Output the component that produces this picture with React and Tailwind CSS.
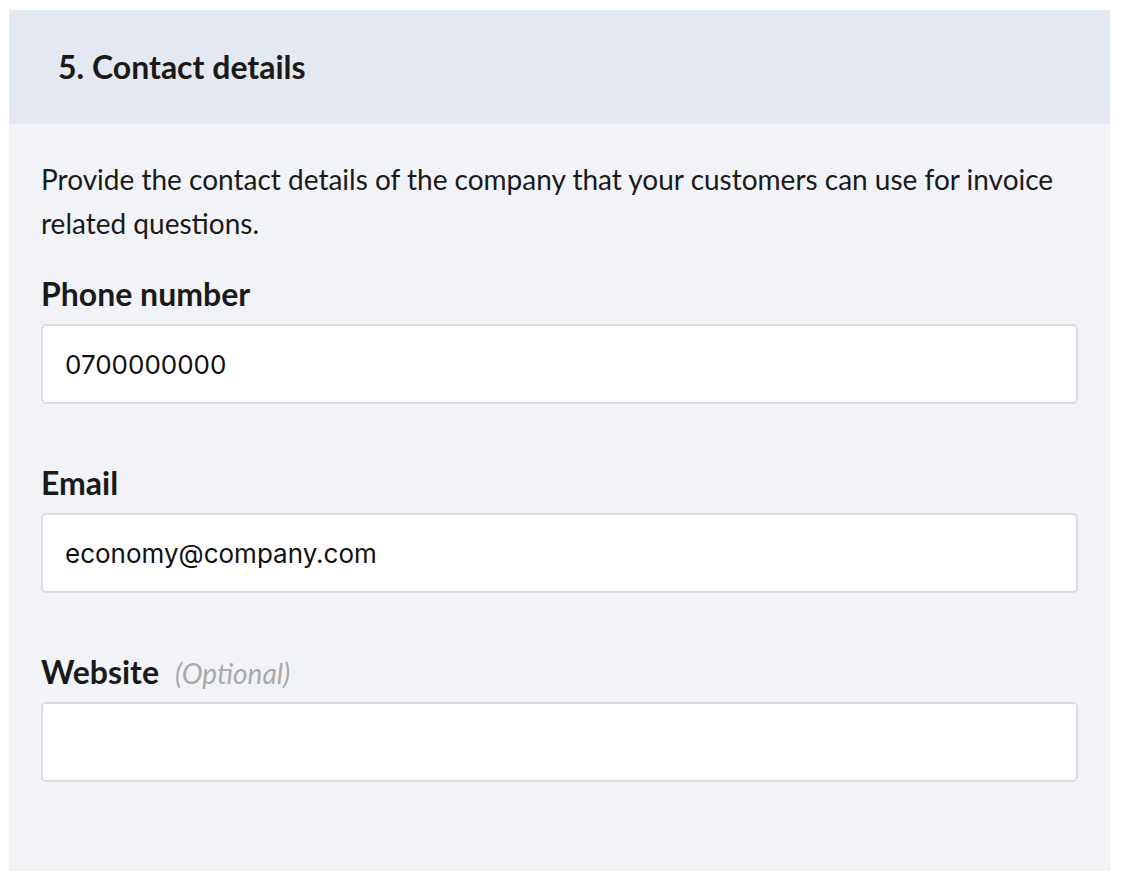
import React from "react";

const Field = ({ label, optional, value }) => (
    <div className="flex flex-col">
        <div className="flex items-baseline gap-4 h-[40px]">
            <span className="text-[32px] font-bold text-[#1a1a1a] leading-[40px]">{label}</span>
            {optional && (
                <span className="text-[28px] italic text-[#aaaaaa] leading-[40px]">(Optional)</span>
            )}
        </div>
        <input
            type="text"
            defaultValue={value}
            className="mt-[10px] h-[80px] w-full rounded-[5px] border-2 border-[#dcdcdc] bg-white px-[22px] text-[26px] text-[#111] outline-none font-['Inter',sans-serif]"
        />
    </div>
);

export default function App() {
    return (
        <div className="min-h-screen bg-white pt-[10px] pl-[9px] pr-[13px] font-['Lato',sans-serif]">
            <div className="w-[1101px] h-[861px] bg-[#f1f3f7]">
                <div className="h-[114px] bg-[#e4e8f0] flex items-center pl-[49px]">
                    <h2 className="text-[32px] font-bold text-[#1a1a1a]">5. Contact details</h2>
                </div>
                <div className="px-[32px] pt-[33px]">
                    <p className="text-[28px] leading-[44px] text-[#1a1a1a]">
                        Provide the contact details of the company that your customers can use for invoice related questions.
                    </p>
                    <div className="mt-[29px] flex flex-col gap-[59px]">
                        <Field label="Phone number" value="0700000000" />
                        <Field label="Email" value="economy@company.com" />
                        <Field label="Website" optional value="" />
                    </div>
                </div>
            </div>
        </div>
    );
}
